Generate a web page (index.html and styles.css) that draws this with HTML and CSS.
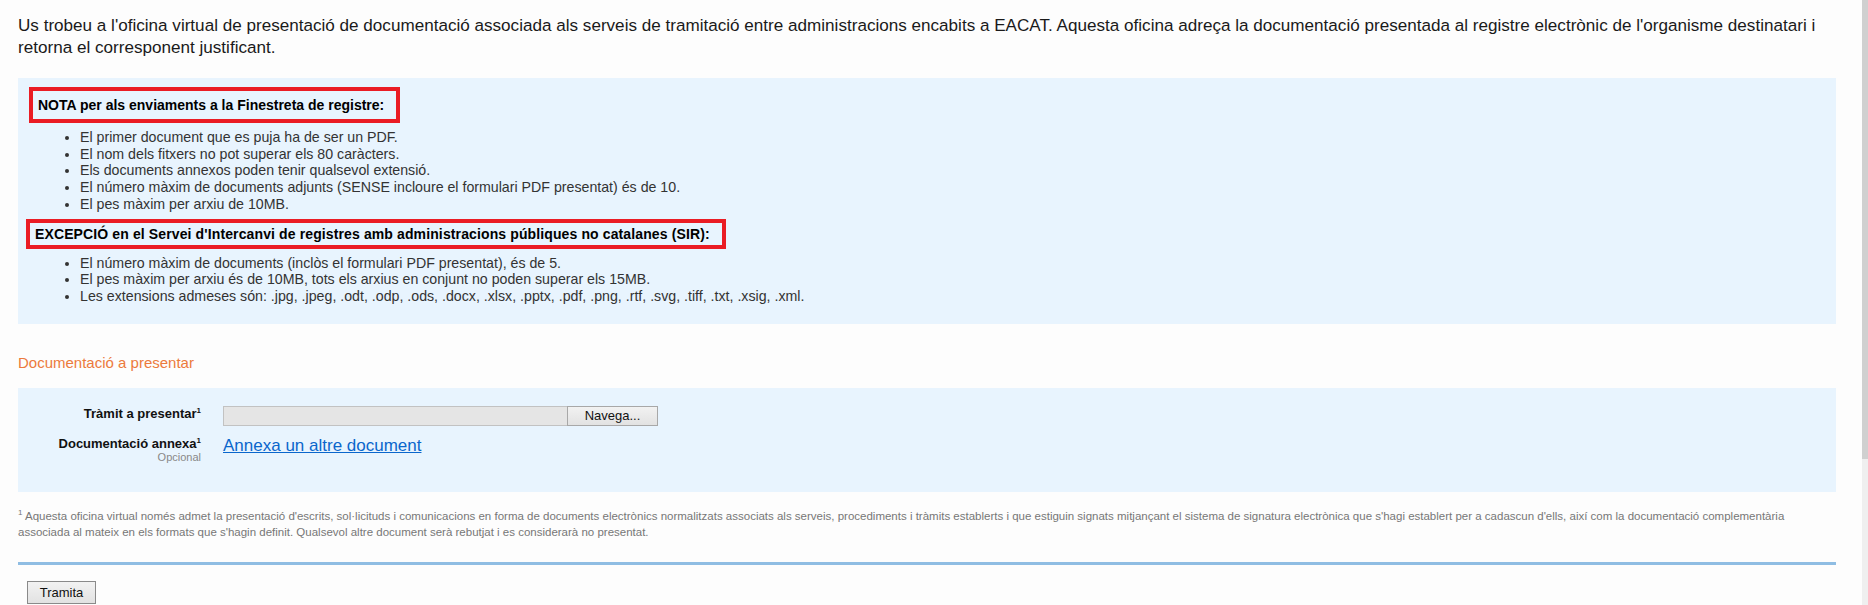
FILE: index.html
```html
<!DOCTYPE html>
<html lang="ca">

<head>
    <meta charset="UTF-8" />
    <meta name="viewport" content="width=device-width, initial-scale=1.0" />
    <title>Oficina virtual – EACAT</title>
    <link rel="stylesheet" href="styles.css">
</head>

<body>
    <div class="page">
        <main class="content">
            <p class="intro">Us trobeu a l'oficina virtual de presentació de documentació associada als serveis de tramitació entre administracions encabits a EACAT. Aquesta oficina adreça la documentació presentada al registre electrònic de l'organisme destinatari i retorna el corresponent justificant.</p>

            <!-- Avisos -->
            <div class="info-box">
                <div class="note-title note-first">NOTA per als enviaments a la Finestreta de registre:</div>
                <ul class="note-list">
                    <li>El primer document que es puja ha de ser un PDF.</li>
                    <li>El nom dels fitxers no pot superar els 80 caràcters.</li>
                    <li>Els documents annexos poden tenir qualsevol extensió.</li>
                    <li>El número màxim de documents adjunts (SENSE incloure el formulari PDF presentat) és de 10.</li>
                    <li>El pes màxim per arxiu de 10MB.</li>
                </ul>
                <div class="note-title note-second">EXCEPCIÓ en el Servei d'Intercanvi de registres amb administracions públiques no catalanes (SIR):</div>
                <ul class="note-list">
                    <li>El número màxim de documents (inclòs el formulari PDF presentat), és de 5.</li>
                    <li>El pes màxim per arxiu és de 10MB, tots els arxius en conjunt no poden superar els 15MB.</li>
                    <li>Les extensions admeses són: .jpg, .jpeg, .odt, .odp, .ods, .docx, .xlsx, .pptx, .pdf, .png, .rtf, .svg, .tiff, .txt, .xsig, .xml.</li>
                </ul>
            </div>

            <h2 class="section-title">Documentació a presentar</h2>

            <!-- Formulari -->
            <div class="form-box">
                <div class="form-row">
                    <label class="form-label">Tràmit a presentar<sup>1</sup></label>
                    <div class="file-field">
                        <span class="file-input"></span>
                        <button class="browse-btn" type="button">Navega...</button>
                    </div>
                </div>
                <div class="form-row">
                    <div class="form-label">Documentació annexa<sup>1</sup>
                        <span class="optional">Opcional</span>
                    </div>
                    <a href="#" class="add-link">Annexa un altre document</a>
                </div>
            </div>

            <p class="footnote"><sup>1</sup> Aquesta oficina virtual només admet la presentació d'escrits, sol·licituds i comunicacions en forma de documents electrònics normalitzats associats als serveis, procediments i tràmits establerts i que estiguin signats mitjançant el sistema de signatura electrònica que s'hagi establert per a cadascun d'ells, així com la documentació complementària<br />associada al mateix en els formats que s'hagin definit. Qualsevol altre document serà rebutjat i es considerarà no presentat.</p>

            <hr class="divider" />

            <button class="submit-btn" type="button">Tramita</button>
        </main>

        <div class="scrollbar">
            <div class="scroll-thumb"></div>
        </div>
    </div>
</body>

</html>
```

FILE: styles.css
```css
:root {
    --box-bg: #e8f4fe;
    --red: #ea1c24;
    --orange: #ec7a3c;
    --link: #0a66cc;
}

* {
    box-sizing: border-box;
}

html,
body {
    margin: 0;
    height: 100%;
    overflow: hidden;
}

body {
    font-family: "Liberation Sans", Arial, sans-serif;
    background: #fdfdfd;
    color: #222;
}

.page {
    display: flex;
    height: 100%;
}

.content {
    width: 1836px;
    padding-left: 18px;
}

.intro {
    margin: 15px 0 0;
    font-size: 17.1px;
    line-height: 22px;
    color: #1a1a1a;
}

.info-box {
    margin-top: 19px;
    background: var(--box-bg);
    padding: 9px 0 14px;
}

.note-title {
    display: inline-block;
    border: 4px solid var(--red);
    font-size: 14px;
    font-weight: 700;
    color: #000;
}

.note-first {
    margin-left: 11px;
    padding: 6px 12px 6px 5px;
}

.note-second {
    margin-left: 8px;
    margin-top: 1px;
    padding: 3px 12px 3px 5px;
    letter-spacing: 0.12px;
}

.note-list {
    margin: 6px 0 5px;
    padding-left: 62px;
    font-size: 14.2px;
    line-height: 16.7px;
    color: #333;
}

.section-title {
    margin: 29px 0 0;
    font-size: 15px;
    font-weight: 400;
    line-height: 20px;
    color: var(--orange);
}

.form-box {
    margin-top: 15px;
    background: var(--box-bg);
    padding: 18px 0 29px;
    display: flex;
    flex-direction: column;
    gap: 10px;
}

.form-row {
    display: grid;
    grid-template-columns: 183px 1fr;
    column-gap: 22px;
    align-items: start;
}

.form-label {
    text-align: right;
    font-size: 13px;
    font-weight: 700;
    line-height: 16px;
    color: #111;
}

.form-label sup {
    font-size: 8px;
    vertical-align: top;
    line-height: 10px;
}

.optional {
    display: block;
    margin-top: -1px;
    font-size: 11px;
    font-weight: 400;
    line-height: 12px;
    color: #888;
}

.file-field {
    display: flex;
}

.file-input {
    width: 345px;
    height: 20px;
    background: #e5e5e5;
    border: 1px solid #c2c2c2;
}

.browse-btn,
.submit-btn {
    font-family: inherit;
    font-size: 13px;
    color: #111;
    background: linear-gradient(#f2f2f2, #e2e2e2);
    border: 1px solid #a8a8a8;
    border-radius: 0;
    padding: 0;
}

.browse-btn {
    width: 91px;
    height: 20px;
    margin-left: -1px;
}

.add-link {
    font-size: 17px;
    line-height: 20px;
    color: var(--link);
}

.footnote {
    margin: 16px 0 0;
    font-size: 11.5px;
    line-height: 16.5px;
    color: #777;
}

.footnote sup {
    font-size: 8px;
    vertical-align: top;
    line-height: 10px;
}

.divider {
    margin: 21px 0 0;
    border: 0;
    height: 3px;
    background: #8fbde3;
}

.submit-btn {
    margin: 16px 0 0 9px;
    width: 69px;
    height: 23px;
    border-color: #8a8a8a;
}

.scrollbar {
    margin-left: auto;
    width: 6px;
    background: #efefef;
}

.scroll-thumb {
    height: 459px;
    background: #d0d0d0;
}
```
